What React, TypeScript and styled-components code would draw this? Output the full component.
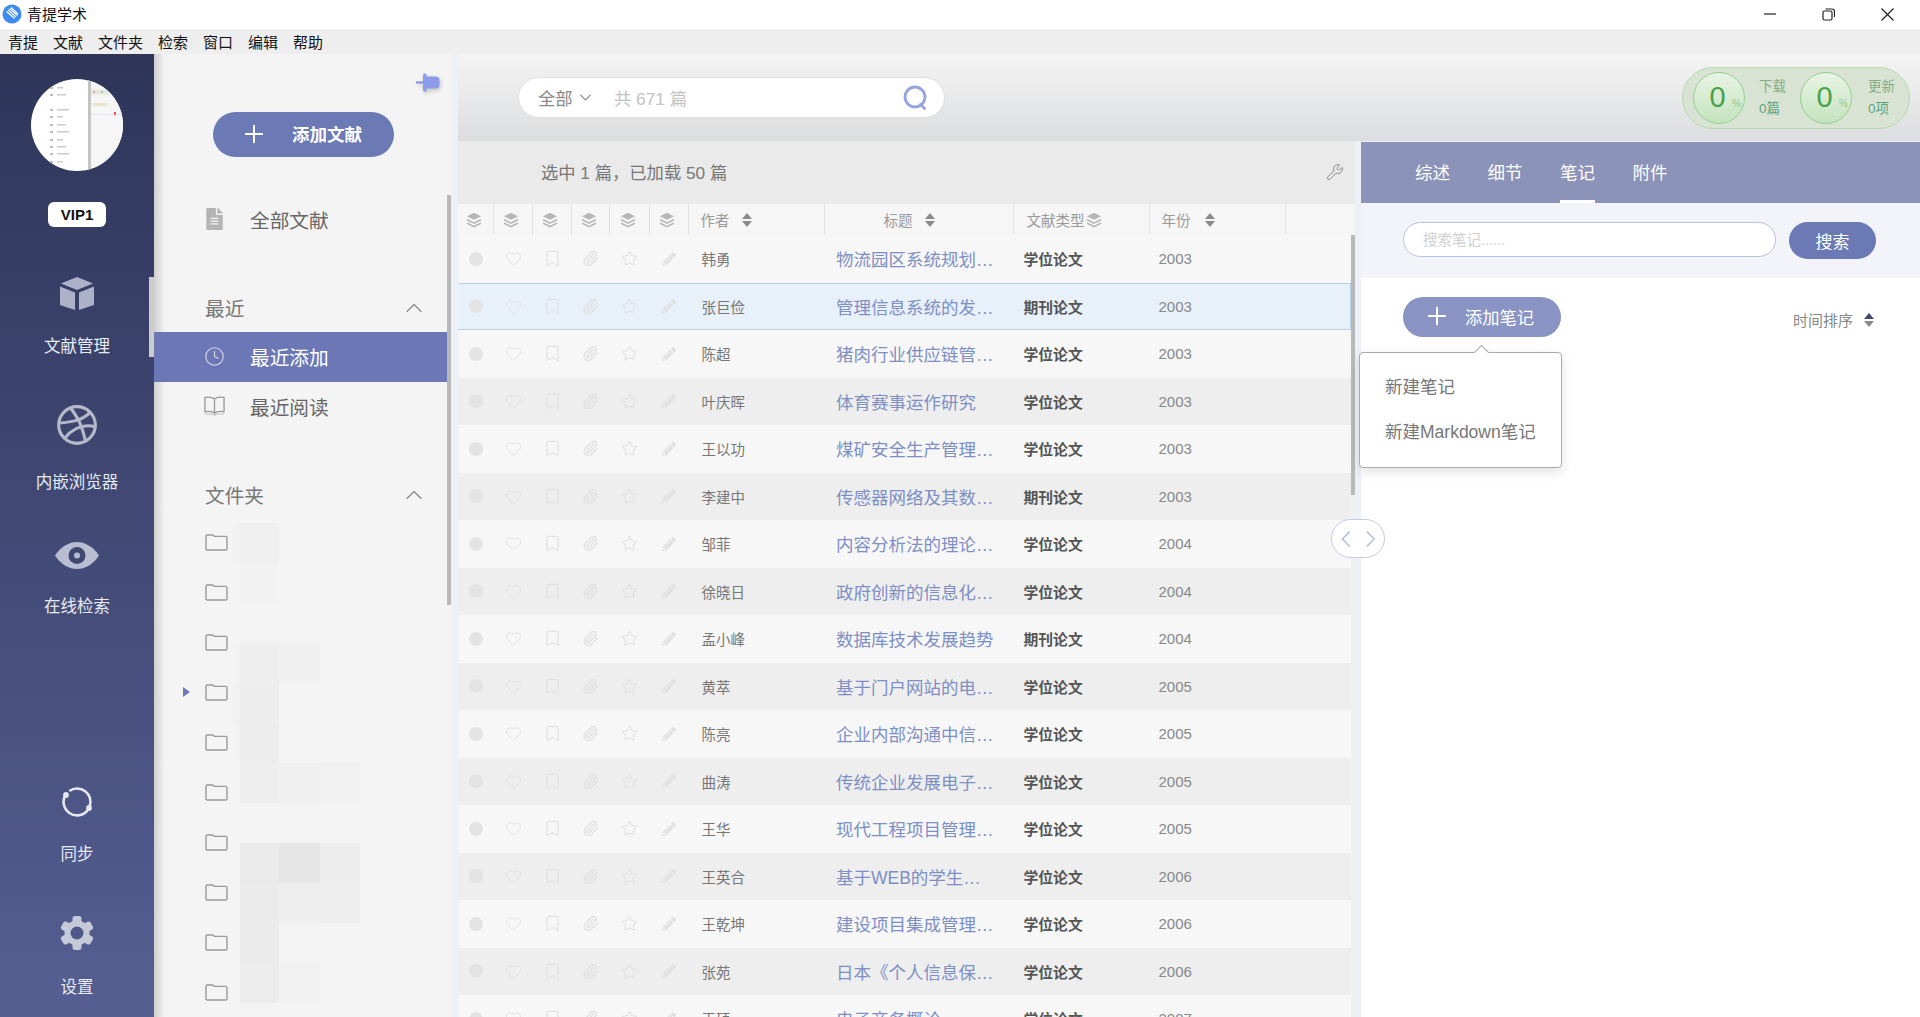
import styled, { createGlobalStyle } from "styled-components";
import { ChevronDown, ChevronLeft, ChevronRight, ChevronUp, Clock, Heart, Bookmark, Dribbble, Paperclip, Plus, Star, Wrench } from "lucide-react";
import { FaFileAlt, FaPencilAlt } from "react-icons/fa";

const Global = createGlobalStyle`
  html, body {
    margin: 0;
    padding: 0;
    height: 100%;
    overflow: hidden;
    font-family: "Liberation Sans", "Noto Sans CJK SC", sans-serif;
  }
  * {
    box-sizing: border-box;
  }
`;

const Page = styled.div`
  width: 1920px;
  height: 1017px;
  display: flex;
  flex-direction: column;
  overflow: hidden;
  background: #edf0f7;
`;

const TitleBar = styled.div`
  height: 29px;
  flex: none;
  display: flex;
  align-items: center;
  padding: 0 0 1px 2px;
  background: #fff;
  color: #111;
  font-size: 15px;
`;

const AppName = styled.span`
  margin: 0 0 1px 5px;
`;

const WinControls = styled.div`
  margin-left: auto;
  display: flex;
  align-items: center;
  gap: 46px;
  padding-right: 26px;
  color: #222;
`;

const MenuBar = styled.div`
  height: 25px;
  flex: none;
  display: flex;
  align-items: center;
  gap: 15px;
  padding-left: 8px;
  background: #eee;
  color: #111;
  font-size: 15px;
`;

const Body = styled.div`
  flex: 1;
  display: flex;
  min-height: 0;
`;

const Sidebar = styled.aside`
  width: 154px;
  flex: none;
  display: flex;
  flex-direction: column;
  align-items: center;
  padding-top: 25px;
  background: linear-gradient(180deg, #2e3559 0%, #555f92 100%);
`;

const Avatar = styled.div`
  width: 92px;
  height: 92px;
  border-radius: 50%;
  overflow: hidden;
  background: #fff;
`;

const Vip = styled.div`
  width: 58px;
  height: 25px;
  margin-top: 31px;
  border-radius: 6px;
  background: #fff;
  color: #111;
  font-size: 15px;
  font-weight: 700;
  display: flex;
  align-items: center;
  justify-content: center;
`;

const NavItem = styled.div<{ $top: number; $gap: number; $active?: boolean }>`
  position: relative;
  width: 100%;
  margin-top: ${p => p.$top}px;
  display: flex;
  flex-direction: column;
  align-items: center;
  gap: ${p => p.$gap}px;
  color: #e8eaf2;
  font-size: 16.5px;
  line-height: 22px;
  &::after {
    content: "";
    display: ${p => (p.$active ? "block" : "none")};
    position: absolute;
    right: 0;
    top: 4px;
    width: 5px;
    height: 80px;
    background: #ccc;
  }
`;

const NavIcon = styled.div`
  height: 40px;
  display: flex;
  align-items: center;
  justify-content: center;
`;

const Panel = styled.nav`
  position: relative;
  width: 297px;
  flex: none;
  display: flex;
  flex-direction: column;
  padding-right: 4px;
  background: linear-gradient(90deg, #cfcfcf 0, #f4f4f4 11px);
  color: #666;
  font-size: 19.7px;
`;

const PinRow = styled.div`
  height: 58px;
  flex: none;
  display: flex;
  justify-content: flex-end;
  align-items: flex-end;
  padding: 0 7px 19px 0;
`;

const PinIcon = styled.svg`
  filter: drop-shadow(1px 2px 2px rgba(0, 0, 0, 0.2));
`;

const AddDoc = styled.button`
  width: 181px;
  height: 45px;
  flex: none;
  margin-left: 59px;
  padding: 0 0 2px 27px;
  border: 0;
  border-radius: 23px;
  background: #6b79b5;
  color: #fff;
  font: 700 17.5px "Liberation Sans", "Noto Sans CJK SC", sans-serif;
  display: flex;
  align-items: center;
  gap: 24px;
`;

const PanelRow = styled.div<{ $active?: boolean; $top?: number }>`
  height: 50px;
  flex: none;
  margin-top: ${p => p.$top ?? 0}px;
  display: flex;
  align-items: center;
  gap: 25px;
  padding: 0 0 2px 50px;
  background: ${p => (p.$active ? "#6b78b5" : "transparent")};
  color: ${p => (p.$active ? "#fff" : "#666")};
`;

const RowIcon = styled.span<{ $start?: boolean }>`
  width: 21px;
  display: flex;
  justify-content: ${p => (p.$start ? "flex-start" : "center")};
  color: #b4b4b4;
`;

const GroupHead = styled.div<{ $top: number }>`
  height: 44px;
  flex: none;
  margin-top: ${p => p.$top}px;
  display: flex;
  align-items: center;
  justify-content: space-between;
  padding: 0 19px 5px 51px;
  color: #777;
`;

const FolderList = styled.div`
  flex: none;
  margin-top: -2px;
  display: flex;
  flex-direction: column;
`;

const FolderRow = styled.div`
  height: 50px;
  flex: none;
  display: flex;
  align-items: center;
  gap: 15px;
  padding-left: 29px;
`;

const Caret = styled.span<{ $open?: boolean }>`
  width: 0;
  height: 0;
  border-left: 7px solid ${p => (p.$open ? "#6b79b5" : "transparent")};
  border-top: 5.5px solid transparent;
  border-bottom: 5.5px solid transparent;
`;

const Mosaic = styled.div`
  position: absolute;
  left: 79px;
  top: 469px;
  display: grid;
  grid-template-columns: 7px 39px 41px 40px;
  grid-auto-rows: 40px;
`;

const MosaicCell = styled.div<{ $c: string }>`
  background: ${p => p.$c};
`;

const VBar = styled.div<{ $top: number; $h: number; $right: number }>`
  position: absolute;
  right: ${p => p.$right}px;
  top: ${p => p.$top}px;
  width: 4px;
  height: ${p => p.$h}px;
  background: #b9b9b9;
`;

const Main = styled.main`
  flex: 1;
  min-width: 0;
  margin-left: 7px;
  display: flex;
  flex-direction: column;
`;

const Toolbar = styled.div`
  height: 87px;
  flex: none;
  display: flex;
  align-items: center;
  justify-content: space-between;
  padding: 0 10px 0 60px;
  background: linear-gradient(180deg, #f4f4f4 0%, #dcdde0 100%);
`;

const SearchBox = styled.div`
  width: 427px;
  height: 41px;
  display: flex;
  align-items: center;
  padding: 0 16px 0 19px;
  border: 1px solid #dedede;
  border-radius: 21px;
  background: #fff;
  color: #888;
  font-size: 17.3px;
`;

const Scope = styled.span`
  display: flex;
  align-items: center;
  gap: 3px;
  width: 76px;
`;

const Count = styled.span`
  color: #c2c2c2;
`;

const SearchGlyph = styled.span`
  margin-left: auto;
  display: flex;
`;

const Pill = styled.div`
  width: 228px;
  height: 62px;
  display: flex;
  align-items: center;
  padding-left: 10px;
  border: 1px solid #b6d9ab;
  border-radius: 31px;
  background: #d8e3d4;
`;

const Gauge = styled.div`
  position: relative;
  width: 52px;
  height: 52px;
  flex: none;
  display: flex;
  align-items: center;
  justify-content: center;
  padding-right: 3px;
  border: 1.5px solid #94cf90;
  border-radius: 50%;
  background: linear-gradient(180deg, #e9f4e5 0%, #c3e3bd 100%);
  color: #4aa24a;
  font-size: 29px;
`;

const Percent = styled.span`
  position: absolute;
  right: 3px;
  bottom: 14px;
  font-size: 10px;
  color: #93c98f;
`;

const GaugeText = styled.div<{ $left: number }>`
  width: 27px;
  margin: 0 14px 0 ${p => p.$left}px;
  flex: none;
  font-size: 13.5px;
  line-height: 22px;
  color: #83ad83;
  white-space: nowrap;
`;

const GaugeValue = styled.div`
  color: #5ea57c;
`;

const Content = styled.div`
  position: relative;
  flex: 1;
  display: flex;
  min-height: 0;
`;

const TableArea = styled.section`
  width: 897px;
  flex: none;
  display: flex;
  flex-direction: column;
  background: #f0f0f0;
`;

const StatusRow = styled.div`
  height: 63px;
  flex: none;
  display: flex;
  align-items: center;
  justify-content: space-between;
  padding: 0 11px 2px 83px;
  background: #eaeaea;
  color: #777;
  font-size: 17.3px;
`;

const columns = "35.5px 39px 39px 38.5px 39.5px 39px 136px 189px 136px 136px 1fr";

const HeadRow = styled.div`
  height: 31px;
  flex: none;
  display: grid;
  grid-template-columns: ${columns};
  background: #f6f6f6;
  color: #9a9a9a;
  font-size: 14.5px;
`;

const HeadCell = styled.div<{ $pad?: number; $gap?: number }>`
  display: flex;
  align-items: center;
  justify-content: ${p => (p.$pad === undefined ? "center" : "flex-start")};
  gap: ${p => p.$gap ?? 0}px;
  padding-left: ${p => p.$pad ?? 0}px;
  padding-right: ${p => (p.$pad === undefined ? 3 : 0)}px;
  border-right: 1px solid #e2e2e2;
  &:last-child {
    border-right: 0;
  }
`;

const Rows = styled.div`
  width: 893px;
  flex: 1;
  overflow: hidden;
`;

const Row = styled.div<{ $selected?: boolean; $even?: boolean }>`
  height: 47.5px;
  display: grid;
  grid-template-columns: ${columns};
  align-items: center;
  background: ${p => (p.$selected ? "#e8f0fa" : p.$even ? "#eeeeee" : "#f7f7f7")};
  border-style: solid;
  border-color: #b5d0ea;
  border-width: ${p => (p.$selected ? "1px 1px 1px 0" : "0")};
`;

const IconCell = styled.div`
  display: flex;
  justify-content: center;
  color: #e0e0e0;
`;

const Dot = styled.span`
  width: 14px;
  height: 14px;
  border-radius: 50%;
  background: #e3e3e3;
`;

const Author = styled.div`
  padding-left: 13px;
  color: #777;
  font-size: 14.5px;
`;

const DocTitle = styled.div`
  padding-left: 11.5px;
  color: #7d8fc4;
  font-size: 17.5px;
  white-space: nowrap;
`;

const DocType = styled.div`
  padding-left: 10px;
  color: #555;
  font-size: 14.8px;
  font-weight: 700;
`;

const Year = styled.div`
  padding-left: 9px;
  color: #888;
  font-size: 15px;
`;

const Detail = styled.section`
  position: relative;
  flex: 1;
  margin-left: 6px;
  display: flex;
  flex-direction: column;
  border-top: 1px solid #f0f1f6;
  background: #fff;
`;

const Tabs = styled.div`
  height: 61px;
  flex: none;
  display: flex;
  gap: 37.5px;
  padding-left: 54px;
  background: #8b93b9;
`;

const Tab = styled.div<{ $active?: boolean }>`
  display: flex;
  align-items: center;
  padding-top: 1px;
  border-bottom: 3px solid ${p => (p.$active ? "#fff" : "transparent")};
  color: #fff;
  font-size: 17.5px;
`;

const NoteSearch = styled.div`
  height: 75px;
  flex: none;
  display: flex;
  align-items: flex-start;
  gap: 13px;
  padding: 19px 0 0 42px;
  background: #f2f4f9;
`;

const NoteInput = styled.div`
  width: 373px;
  height: 35px;
  display: flex;
  align-items: center;
  padding: 0 0 2px 19px;
  border: 1px solid #b9c0dc;
  border-radius: 18px;
  background: #fff;
  color: #cfcfcf;
  font-size: 14.5px;
`;

const NoteSearchBtn = styled.button`
  width: 87px;
  height: 37px;
  padding: 0;
  border: 0;
  border-radius: 19px;
  background: #6b79b5;
  color: #fff;
  font: 17px "Liberation Sans", "Noto Sans CJK SC", sans-serif;
`;

const NoteBar = styled.div`
  display: flex;
  align-items: flex-start;
  justify-content: space-between;
  padding: 19px 46px 0 42px;
`;

const AddNote = styled.button`
  width: 158px;
  height: 40px;
  padding: 0 0 2px 20px;
  border: 0;
  border-radius: 20px;
  background: #8a94c4;
  color: #fff;
  font: 17.3px "Liberation Sans", "Noto Sans CJK SC", sans-serif;
  display: flex;
  align-items: center;
  gap: 14px;
`;

const SortLabel = styled.div`
  display: flex;
  align-items: center;
  gap: 11px;
  margin-top: 12px;
  color: #888;
  font-size: 15px;
`;

const Popover = styled.div`
  position: absolute;
  left: -2px;
  top: 210px;
  width: 203px;
  height: 116px;
  display: flex;
  flex-direction: column;
  gap: 22px;
  padding: 23px 0 0 25px;
  border: 1px solid #aaa;
  border-radius: 4px;
  background: #fff;
  box-shadow: 0 4px 12px rgba(0, 0, 0, 0.12);
  color: #777;
  font-size: 17.5px;
  line-height: 23px;
  &::before {
    content: "";
    position: absolute;
    left: 116px;
    top: -6px;
    width: 10px;
    height: 10px;
    background: #fff;
    border-left: 1px solid #aaa;
    border-top: 1px solid #aaa;
    transform: rotate(45deg);
  }
`;

const Pager = styled.div`
  position: absolute;
  left: 873px;
  top: 378px;
  width: 54px;
  height: 39px;
  display: flex;
  align-items: center;
  justify-content: center;
  border: 1px solid #c5cbe6;
  border-radius: 20px;
  background: #fff;
  color: #b4bfe0;
  svg + svg {
    margin-left: -3px;
  }
`;

const Sort = ({ top = "#8a8a8a", bottom = "#8a8a8a" }: { top?: string; bottom?: string }) => (
  <svg width="10" height="14" viewBox="0 0 10 14">
    <path d="M5 0l5 6H0z" fill={top} />
    <path d="M5 14l5-6H0z" fill={bottom} />
  </svg>
);

const Layers = () => (
  <svg width="16" height="16" viewBox="0 0 16 16" fill="#b6b6b6">
    <path d="M8 .8l7 3.500-7 3.500-7-3.500z" />
    <path d="M1 6.800l7 3.500 7-3.500v1.800l-7 3.500-7-3.500z" />
    <path d="M1 10.200l7 3.500 7-3.500V12l-7 3.500L1 12z" />
  </svg>
);

const Folder = () => (
  <svg width="23" height="17" viewBox="0 0 23 17" fill="none" stroke="#999" strokeWidth="1.4">
    <path d="M1 2.500c0-.8.5-1.500 1.200-1.500h5.600l1.600 1.400h11.400c.7 0 1.200.6 1.200 1.300V15c0 .6-.5 1-1.200 1H2.200C1.500 16 1 15.600 1 15z" />
  </svg>
);

const Logo = () => (
  <svg width="20" height="20" viewBox="0 0 20 20">
    <circle cx="10" cy="10" r="9.500" fill="#3c8bf2" />
    <path d="M4.500 7.500l8 7M6 6l8 7M7.500 4.500l8 7M9 3.500l7 6.500" stroke="#fff" strokeWidth="1.100" />
  </svg>
);

const Pin = () => (
  <PinIcon width="24" height="20" viewBox="0 0 24 20">
    <path d="M0 9.500h7" stroke="#7f8fe0" strokeWidth="2" strokeLinecap="round" />
    <path d="M7 2c0-1.200 2-2 3-1.200L11 3.500h9c2 0 3.500 1.500 3.500 3.500v5c0 2-1.500 3.500-3.500 3.500h-9l-1 3c-1 .8-3 0-3-1.200z" fill="#8d9ce8" />
  </PinIcon>
);

const Cube = () => (
  <svg width="34" height="33" viewBox="0 0 34 33" fill="#adb2c8">
    <path d="M17 0l16 6.500L17 13 1 6.500z" />
    <path d="M0 9.500l15 6V33L0 28z" />
    <path d="M34 9.500l-15 6V33l15-5z" />
  </svg>
);

const Eye = () => (
  <svg width="44" height="27" viewBox="0 0 44 27">
    <path d="M0 13.500C6 4.500 14 0 22 0s16 4.500 22 13.500C38 22.500 30 27 22 27S6 22.500 0 13.500z" fill="#b9bdd2" />
    <circle cx="22" cy="13.500" r="8.500" fill="#3f4870" />
    <circle cx="22" cy="13.500" r="3" fill="#b9bdd2" />
  </svg>
);

const Sync = () => (
  <svg width="32" height="32" viewBox="0 0 32 32" fill="none" stroke="#e6e7ee" strokeWidth="2.600">
    <path d="M8.260 4.940A13.500 13.500 0 0 1 28.690 20.620" />
    <path d="M27.060 23.740A13.500 13.500 0 0 1 4.940 8.260" />
    <circle cx="5" cy="9" r="1.600" fill="#e6e7ee" />
    <circle cx="28" cy="22" r="1.600" fill="#e6e7ee" />
  </svg>
);

const Gear = () => (
  <svg width="34" height="34" viewBox="0 0 34 34" fill="#c6c9d8">
    {[0, 60, 120].map(a => (
      <rect key={a} x="12.500" y="0" width="9" height="34" rx="2.500" transform={`rotate(${a} 17 17)`} />
    ))}
    <circle cx="17" cy="17" r="12.500" />
    <circle cx="17" cy="17" r="6.500" fill="#4d5788" />
  </svg>
);

const Book = () => (
  <svg width="22" height="22" viewBox="0 0 22 22" fill="none" stroke="#999" strokeWidth="1.400">
    <path d="M11 3.500C9 1.800 4 1.500 1 2v15c3-.5 8-.2 10 1.500 2-1.700 7-2 10-1.500V2c-3-.5-8-.2-10 1.500zM11 3.500v15" />
    <path d="M1 19.500h8.500l1.500 1.500 1.500-1.500H21" stroke="#ccc" />
  </svg>
);

const Magnifier = () => (
  <svg width="25" height="25" viewBox="0 0 25 25" fill="none" stroke="#93a4de" strokeWidth="2.800">
    <circle cx="12" cy="12" r="10" />
    <path d="M17.500 19.500l4 4" strokeLinecap="round" />
  </svg>
);

const Shot = () => (
  <svg width="92" height="92" viewBox="0 0 92 92">
    <rect x="57" width="35" height="92" fill="#f6f6f6" />
    <rect x="57" width="3" height="92" fill="#c4c4c4" />
    <rect x="60" y="10" width="32" height="6" fill="#e9e9e9" />
    <circle cx="63" cy="13" r="1.100" fill="#e88" />
    <circle cx="67" cy="13" r="1.100" fill="#ed8" />
    <circle cx="71" cy="13" r="1.100" fill="#8c8" />
    <rect x="60" y="35" width="32" height="1" fill="#dbe8f8" />
    <rect x="83" y="33" width="2" height="3" fill="#e55" />
    <rect x="62" y="24" width="14" height="3" fill="#ece4c8" />
    {[8, 15, 30, 37, 45, 52, 60, 67, 74, 82].map((y, i) => (
      <g key={y}>
        <rect x="19" y={y} width="3" height="2" fill="#bbb" />
        <rect x="26" y={y} width={6 + (i % 3) * 3} height="1.500" fill="#ccc" />
      </g>
    ))}
  </svg>
);

const mosaic = [
  ["#f1f1f1", "#efefef", "", ""],
  ["#f3f3f3", "#f2f2f2", "", ""],
  ["", "#f3f3f3", "#f3f3f3", ""],
  ["#f2f2f2", "#eeeeee", "#f0f0f0", ""],
  ["#f1f1f1", "#ededed", "", ""],
  ["#f2f2f2", "#ececec", "", ""],
  ["", "#eeeeee", "#f0f0f0", "#f1f1f1"],
  ["", "#f4f4f4", "#f3f3f3", "#f3f3f3"],
  ["", "#eaeaea", "#e6e6e6", "#ededed"],
  ["", "#ebebeb", "#eeeeee", "#eeeeee"],
  ["", "#ebebeb", "#f3f3f3", ""],
  ["", "#ececec", "#f1f1f1", ""],
];

const docs = [
  ["韩勇", "物流园区系统规划…", "学位论文", "2003"],
  ["张巨俭", "管理信息系统的发…", "期刊论文", "2003"],
  ["陈超", "猪肉行业供应链管…", "学位论文", "2003"],
  ["叶庆晖", "体育赛事运作研究", "学位论文", "2003"],
  ["王以功", "煤矿安全生产管理…", "学位论文", "2003"],
  ["李建中", "传感器网络及其数…", "期刊论文", "2003"],
  ["邹菲", "内容分析法的理论…", "学位论文", "2004"],
  ["徐晓日", "政府创新的信息化…", "学位论文", "2004"],
  ["孟小峰", "数据库技术发展趋势", "期刊论文", "2004"],
  ["黄萃", "基于门户网站的电…", "学位论文", "2005"],
  ["陈亮", "企业内部沟通中信…", "学位论文", "2005"],
  ["曲涛", "传统企业发展电子…", "学位论文", "2005"],
  ["王华", "现代工程项目管理…", "学位论文", "2005"],
  ["王英合", "基于WEB的学生…", "学位论文", "2006"],
  ["王乾坤", "建设项目集成管理…", "学位论文", "2006"],
  ["张苑", "日本《个人信息保…", "学位论文", "2006"],
  ["王硕", "电子商务概论", "学位论文", "2007"],
];

export default function App() {
  return (
    <Page>
      <Global />
      <TitleBar>
        <Logo />
        <AppName>青提学术</AppName>
        <WinControls>
          <svg width="12" height="12" viewBox="0 0 12 12" stroke="#222" strokeWidth="1.200" fill="none">
            <path d="M0 6h12" />
          </svg>
          <svg width="13" height="13" viewBox="0 0 13 13" stroke="#222" strokeWidth="1.200" fill="none">
            <rect x="1" y="3" width="9" height="9" rx="1.500" />
            <path d="M3.500 1H10c1.500 0 2.500 1 2.500 2.500V9" />
          </svg>
          <svg width="13" height="13" viewBox="0 0 13 13" stroke="#222" strokeWidth="1.200" fill="none">
            <path d="M.5 .5l12 12M12.500 .5l-12 12" />
          </svg>
        </WinControls>
      </TitleBar>
      <MenuBar>
        {["青提", "文献", "文件夹", "检索", "窗口", "编辑", "帮助"].map(m => (
          <span key={m}>{m}</span>
        ))}
      </MenuBar>
      <Body>
        <Sidebar>
          <Avatar>
            <Shot />
          </Avatar>
          <Vip>VIP1</Vip>
          <NavItem $top={46} $gap={22} $active>
            <NavIcon>
              <Cube />
            </NavIcon>
            文献管理
          </NavItem>
          <NavItem $top={48} $gap={26}>
            <NavIcon>
              <Dribbble size={44} color="#b6b9ca" strokeWidth={1.7} />
            </NavIcon>
            内嵌浏览器
          </NavItem>
          <NavItem $top={42} $gap={20}>
            <NavIcon>
              <Eye />
            </NavIcon>
            在线检索
          </NavItem>
          <NavItem $top={165} $gap={21}>
            <NavIcon>
              <Sync />
            </NavIcon>
            同步
          </NavItem>
          <NavItem $top={48} $gap={23}>
            <NavIcon>
              <Gear />
            </NavIcon>
            设置
          </NavItem>
        </Sidebar>

        <Panel>
          <PinRow>
            <Pin />
          </PinRow>
          <AddDoc>
            <Plus size={28} strokeWidth={1.7} />
            添加文献
          </AddDoc>
          <PanelRow $top={38}>
            <RowIcon $start>
              <FaFileAlt size={22} />
            </RowIcon>
            全部文献
          </PanelRow>
          <GroupHead $top={43}>
            最近
            <ChevronUp size={28} strokeWidth={1} color="#888" />
          </GroupHead>
          <PanelRow $active>
            <RowIcon>
              <Clock size={25} strokeWidth={1.2} color="#d9dcec" />
            </RowIcon>
            最近添加
          </PanelRow>
          <PanelRow>
            <RowIcon>
              <Book />
            </RowIcon>
            最近阅读
          </PanelRow>
          <GroupHead $top={43}>
            文件夹
            <ChevronUp size={28} strokeWidth={1} color="#888" />
          </GroupHead>
          <FolderList>
            {Array.from({ length: 10 }, (_, i) => (
              <FolderRow key={i}>
                <Caret $open={i === 3} />
                <Folder />
              </FolderRow>
            ))}
          </FolderList>
          <Mosaic>
            {mosaic.flat().map((c, i) => (
              <MosaicCell key={i} $c={c || "transparent"} />
            ))}
          </Mosaic>
          <VBar $top={141} $h={410} $right={0} />
        </Panel>

        <Main>
          <Toolbar>
            <SearchBox>
              <Scope>
                全部
                <ChevronDown size={19} strokeWidth={1.5} />
              </Scope>
              <Count>共 671 篇</Count>
              <SearchGlyph>
                <Magnifier />
              </SearchGlyph>
            </SearchBox>
            <Pill>
              <Gauge>
                0<Percent>%</Percent>
              </Gauge>
              <GaugeText $left={14}>
                下载
                <GaugeValue>0篇</GaugeValue>
              </GaugeText>
              <Gauge>
                0<Percent>%</Percent>
              </Gauge>
              <GaugeText $left={16}>
                更新
                <GaugeValue>0项</GaugeValue>
              </GaugeText>
            </Pill>
          </Toolbar>
          <Content>
            <TableArea>
              <StatusRow>
                选中 1 篇，已加载 50 篇
                <Wrench size={18} strokeWidth={1.3} color="#888" />
              </StatusRow>
              <HeadRow>
                {Array.from({ length: 6 }, (_, i) => (
                  <HeadCell key={i}>
                    <Layers />
                  </HeadCell>
                ))}
                <HeadCell $pad={12} $gap={12}>
                  作者
                  <Sort />
                </HeadCell>
                <HeadCell $pad={59} $gap={12}>
                  标题
                  <Sort />
                </HeadCell>
                <HeadCell $pad={13} $gap={1}>
                  文献类型
                  <Layers />
                </HeadCell>
                <HeadCell $pad={12} $gap={14}>
                  年份
                  <Sort />
                </HeadCell>
                <HeadCell />
              </HeadRow>
              <Rows>
                {docs.map((d, i) => (
                  <Row key={i} $selected={i === 1} $even={i % 2 === 1}>
                    <IconCell>
                      <Dot />
                    </IconCell>
                    <IconCell>
                      <Heart size={17} strokeWidth={1.4} />
                    </IconCell>
                    <IconCell>
                      <Bookmark size={19} strokeWidth={1.4} />
                    </IconCell>
                    <IconCell>
                      <Paperclip size={17} strokeWidth={2} />
                    </IconCell>
                    <IconCell>
                      <Star size={17} strokeWidth={1.5} />
                    </IconCell>
                    <IconCell>
                      <FaPencilAlt size={14} />
                    </IconCell>
                    <Author>{d[0]}</Author>
                    <DocTitle>{d[1]}</DocTitle>
                    <DocType>{d[2]}</DocType>
                    <Year>{d[3]}</Year>
                  </Row>
                ))}
              </Rows>
              <VBar $top={94} $h={260} $right={565} />
            </TableArea>
            <Detail>
              <Tabs>
                <Tab>综述</Tab>
                <Tab>细节</Tab>
                <Tab $active>笔记</Tab>
                <Tab>附件</Tab>
              </Tabs>
              <NoteSearch>
                <NoteInput>搜索笔记......</NoteInput>
                <NoteSearchBtn>搜索</NoteSearchBtn>
              </NoteSearch>
              <NoteBar>
                <AddNote>
                  <Plus size={28} strokeWidth={1.7} />
                  添加笔记
                </AddNote>
                <SortLabel>
                  时间排序
                  <Sort top="#444a6e" />
                </SortLabel>
              </NoteBar>
              <Popover>
                <span>新建笔记</span>
                <span>新建Markdown笔记</span>
              </Popover>
            </Detail>
            <Pager>
              <ChevronLeft size={28} strokeWidth={1.3} />
              <ChevronRight size={28} strokeWidth={1.3} />
            </Pager>
          </Content>
        </Main>
      </Body>
    </Page>
  );
}
